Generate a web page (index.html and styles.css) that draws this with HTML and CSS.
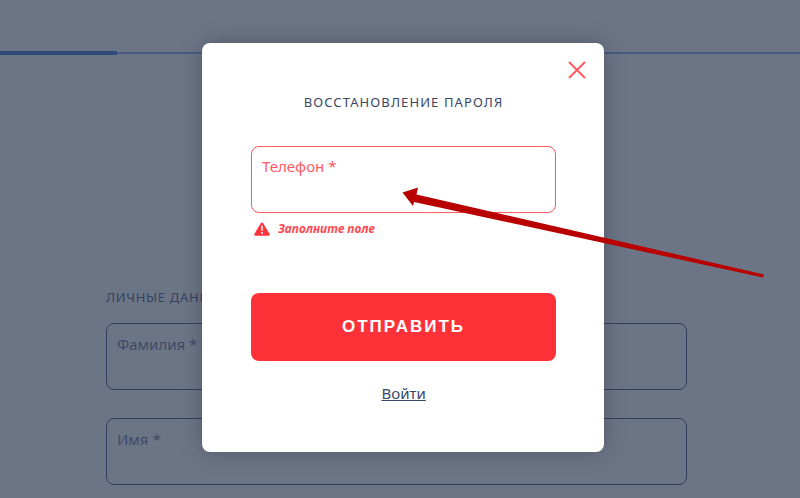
FILE: index.html
```html
<!DOCTYPE html>
<html lang="en">
<head>
    <meta charset="UTF-8">
    <title>Восстановление пароля</title>
    <link rel="stylesheet" href="styles.css">
</head>
<body>
    <div class="page">
        <div class="progress"><div class="progress-done"></div></div>
        <div class="form">
            <h3 class="form-title">ЛИЧНЫЕ ДАННЫЕ</h3>
            <div class="page-field">Фамилия *</div>
            <div class="page-field">Имя *</div>
        </div>
    </div>

    <div class="overlay"></div>

    <div class="modal">
        <button type="button" class="modal-close" aria-label="Закрыть">
            <svg width="18" height="18" viewBox="0 0 18 18"><path d="M1 1L17 17M17 1L1 17" stroke="#ff5a62" stroke-width="2" fill="none"/></svg>
        </button>
        <h2 class="modal-title">ВОССТАНОВЛЕНИЕ ПАРОЛЯ</h2>
        <div class="field-error">Телефон *</div>
        <div class="error-text">
            <svg width="16" height="14" viewBox="0 0 16 14"><path d="M8 .5c.5 0 .9.3 1.200.8l6.300 10.400c.5.9 0 2-1.100 2H1.600C.5 13.700 0 12.600.5 11.700L6.800 1.300C7.100.8 7.500.5 8 .5z" fill="#ff333b"/><path d="M7.100 3.800h1.800l-.3 5.200H7.400z" fill="#fff"/><circle cx="8" cy="11" r="1" fill="#fff"/></svg>
            <span>Заполните поле</span>
        </div>
        <button type="button" class="submit">ОТПРАВИТЬ</button>
        <a class="login" href="#">Войти</a>
    </div>

    <svg class="arrow" width="800" height="498" viewBox="0 0 800 498">
        <path d="M402.500 192.500L418 187.500L416.500 194.500L764 274.500L763 277.500L414 202L413 206Z" fill="#b90000"/>
    </svg>
</body>
</html>
```

FILE: styles.css
```css
* {
    box-sizing: border-box;
}
body {
    margin: 0;
    height: 498px;
    overflow: hidden;
    background-color: #fff;
    font-family: 'Noto Sans', sans-serif;
}
.page {
    height: 498px;
    overflow: hidden;
}
.progress {
    margin-top: 52px;
    height: 2px;
    background-color: #7cb0f0;
    position: relative;
}
.progress-done {
    position: absolute;
    left: 0;
    top: -1px;
    width: 117px;
    height: 4px;
    background-color: #2c6fd0;
}
.form {
    margin: 235px 113px 0 106px;
}
.form-title {
    margin: 0 0 18px;
    font-size: 13px;
    line-height: 16px;
    font-weight: 400;
    letter-spacing: 0.7px;
    color: #4a5678;
}
.page-field {
    height: 67px;
    margin-bottom: 28px;
    padding: 10px 10px;
    border: 1px solid #3e4d7a;
    border-radius: 8px;
    font-size: 15px;
    line-height: 20px;
    color: #667090;
}
.overlay {
    position: absolute;
    inset: 0;
    background-color: rgba(46, 58, 83, 0.7);
}
.modal {
    position: absolute;
    left: 202px;
    top: 43px;
    width: 402px;
    height: 409px;
    padding: 51px 48px 0 49px;
    background-color: #fff;
    border-radius: 8px;
    box-shadow: 0 0 20px rgba(30, 35, 50, 0.35);
}
.modal-close {
    position: absolute;
    right: 18px;
    top: 18px;
    width: 18px;
    height: 18px;
    padding: 0;
    border: none;
    background: none;
}
.modal-close svg {
    display: block;
}
.modal-title {
    margin: 0 0 35px;
    font-size: 13px;
    line-height: 17px;
    font-weight: 400;
    letter-spacing: 1.1px;
    text-align: center;
    color: #3a4766;
}
.field-error {
    height: 67px;
    padding: 9px 10px;
    border: 1px solid #ff5a62;
    border-radius: 8px;
    font-size: 15px;
    line-height: 20px;
    color: #ff5a62;
}
.error-text {
    display: flex;
    align-items: center;
    gap: 8px;
    margin: 8px 0 0 3px;
    height: 15px;
    font-size: 12px;
    font-weight: 700;
    font-style: italic;
    color: #ff4a52;
}
.submit {
    display: block;
    width: 100%;
    height: 68px;
    margin-top: 57px;
    border: none;
    border-radius: 8px;
    background-color: #ff3138;
    color: #fff;
    font-family: 'Liberation Sans', sans-serif;
    font-size: 17px;
    font-weight: 700;
    letter-spacing: 2px;
}
.login {
    display: block;
    width: 44px;
    margin: 22px auto 0;
    font-size: 15px;
    line-height: 20px;
    text-align: center;
    color: #3a4766;
}
.arrow {
    position: absolute;
    left: 0;
    top: 0;
}
```
